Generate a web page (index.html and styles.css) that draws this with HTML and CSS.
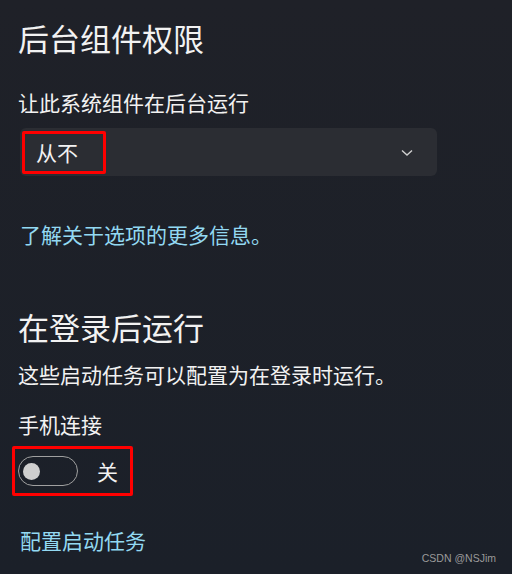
FILE: index.html
```html
<!DOCTYPE html>
<html lang="zh-CN">
<head>
    <meta charset="UTF-8">
    <title>后台组件权限</title>
    <link rel="stylesheet" href="styles.css">
</head>
<body>
    <div class="page">
        <h1 class="title">后台组件权限</h1>
        <p class="label">让此系统组件在后台运行</p>

        <!-- Dropdown -->
        <div class="select">
            <span class="select-value">从不</span>
            <svg class="chevron" width="12" height="8" viewBox="0 0 12 8">
                <path d="M1 1.5 L6 6 L11 1.5" fill="none" stroke="#d0d0d0" stroke-width="1.4"/>
            </svg>
        </div>

        <a class="link link-info" href="#">了解关于选项的更多信息。</a>

        <h1 class="title title-second">在登录后运行</h1>
        <p class="desc">这些启动任务可以配置为在登录时运行。</p>
        <p class="label label-task">手机连接</p>

        <!-- Toggle -->
        <div class="toggle-row">
            <span class="toggle"><span class="knob"></span></span>
            <span class="toggle-text">关</span>
        </div>

        <a class="link link-tasks" href="#">配置启动任务</a>
    </div>
    <div class="watermark">CSDN @NSJim</div>
</body>
</html>
```
FILE: styles.css
```css
* {
    box-sizing: border-box;
    margin: 0;
    padding: 0;
}

html, body {
    height: 100%;
}

body {
    font-family: "Noto Sans CJK SC", "Noto Sans", sans-serif;
    background: linear-gradient(#1f2128, #1b2029);
    color: #f2f2f2;
    position: relative;
    overflow: hidden;
}

.page {
    padding: 17px 0 0 18px;
    display: flex;
    flex-direction: column;
    align-items: flex-start;
}

.title {
    font-size: 31px;
    font-weight: normal;
    line-height: 42px;
}

.label {
    font-size: 21px;
    line-height: 28px;
    margin-top: 29px;
}

.select {
    margin-top: 12px;
    margin-left: 2px;
    width: 417px;
    height: 48px;
    background-color: #2b2d33;
    border-radius: 6px;
    display: flex;
    align-items: center;
    justify-content: space-between;
    padding: 0 24px 0 2px;
}

.select-value {
    border: 3px solid #ff0000;
    border-radius: 2px;
    width: 84px;
    height: 43px;
    font-size: 21px;
    line-height: 37px;
    padding-left: 11px;
}

.chevron {
    margin-top: 2px;
}

.link {
    color: #93d9f2;
    text-decoration: none;
    font-size: 21px;
    line-height: 28px;
    margin-left: 2px;
}

.link-info {
    margin-top: 44px;
}

.title-second {
    margin-top: 58px;
}

.desc {
    font-size: 21px;
    line-height: 28px;
    margin-top: 12px;
}

.label-task {
    margin-top: 22px;
}

.toggle-row {
    margin-top: 8px;
    margin-left: -6px;
    border: 3px solid #ff0000;
    border-radius: 2px;
    width: 121px;
    height: 50px;
    display: flex;
    align-items: center;
    padding-left: 3px;
}

.toggle {
    width: 60px;
    height: 30px;
    border: 1.5px solid #a0a0a0;
    border-radius: 15px;
    display: flex;
    align-items: center;
    padding-left: 4px;
}

.knob {
    width: 17px;
    height: 17px;
    border-radius: 50%;
    background-color: #cfcfcf;
}

.toggle-text {
    font-size: 21px;
    margin-left: 19px;
}

.link-tasks {
    margin-top: 30px;
}

.watermark {
    position: absolute;
    right: 16px;
    bottom: 10px;
    font-family: "Liberation Sans", Arial, sans-serif;
    font-size: 10.5px;
    color: #9a9a9a;
}
```
